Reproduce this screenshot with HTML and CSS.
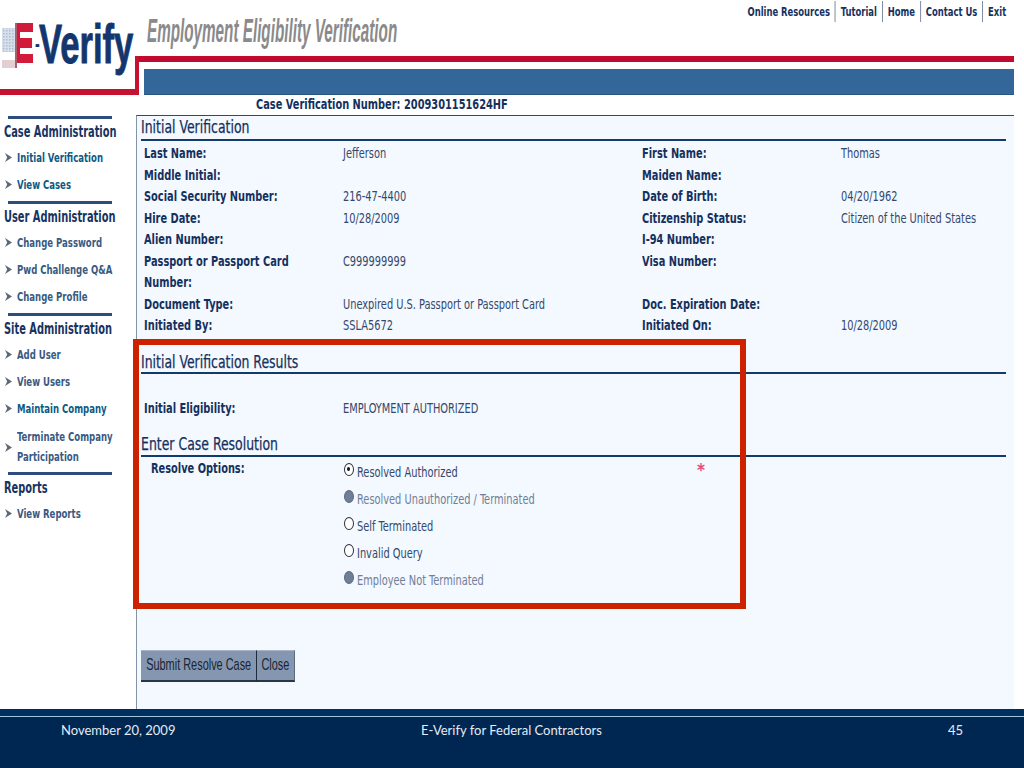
FILE: index.html
```html
<!DOCTYPE html>
<html lang="en">
<head>
<meta charset="utf-8">
<title>E-Verify</title>
<link rel="stylesheet" href="styles.css">
</head>
<body>
<div class="page">
  <header class="header">
    <div class="logo-col">
      <svg class="logo" width="137" height="80" viewBox="0 0 137 80">
        <defs>
          <pattern id="stars" width="3" height="3" patternUnits="userSpaceOnUse">
            <rect width="3" height="3" fill="#d6dfea"/>
            <rect width="1.5" height="1.5" fill="#aebdd2"/>
          </pattern>
        </defs>
        <rect x="2" y="28" width="13" height="24" fill="url(#stars)"/>
        <rect x="2" y="60" width="13" height="8" fill="#e3ced3"/>
        <rect x="15" y="23" width="2" height="45" fill="#a8606c"/>
        <rect x="17" y="23" width="16" height="9" fill="#d01c3a"/>
        <rect x="17" y="32" width="3" height="22" fill="#d01c3a"/>
        <rect x="17" y="38" width="15" height="10" fill="#d01c3a"/>
        <rect x="17" y="54" width="16" height="9" fill="#d01c3a"/>
      </svg>
      <span class="logo-dash">-</span>
      <span class="logo-text">Verify</span>
    </div>
    <div class="banner">
      <div class="banner-top">
        <span class="title-text">Employment Eligibility Verification</span>
        <nav class="topnav">
          <a>Online Resources</a><a>Tutorial</a><a>Home</a><a>Contact Us</a><a>Exit</a>
        </nav>
      </div>
      <div class="red-bar"></div>
      <div class="blue-bar"></div>
    </div>
  </header>
  <div class="content">
    <aside class="sidebar">
      <h3 class="side-head"><span>Case Administration</span></h3>
      <a class="side-link active"><svg class="arrow" viewBox="0 0 7 9"><path d="M0 0L7 4.5L0 9L2.2 4.5Z"/></svg><span>Initial Verification</span></a>
      <a class="side-link active"><svg class="arrow" viewBox="0 0 7 9"><path d="M0 0L7 4.5L0 9L2.2 4.5Z"/></svg><span>View Cases</span></a>
      <h3 class="side-head"><span>User Administration</span></h3>
      <a class="side-link"><svg class="arrow" viewBox="0 0 7 9"><path d="M0 0L7 4.5L0 9L2.2 4.5Z"/></svg><span>Change Password</span></a>
      <a class="side-link"><svg class="arrow" viewBox="0 0 7 9"><path d="M0 0L7 4.5L0 9L2.2 4.5Z"/></svg><span>Pwd Challenge Q&amp;A</span></a>
      <a class="side-link"><svg class="arrow" viewBox="0 0 7 9"><path d="M0 0L7 4.5L0 9L2.2 4.5Z"/></svg><span>Change Profile</span></a>
      <h3 class="side-head"><span>Site Administration</span></h3>
      <a class="side-link"><svg class="arrow" viewBox="0 0 7 9"><path d="M0 0L7 4.5L0 9L2.2 4.5Z"/></svg><span>Add User</span></a>
      <a class="side-link"><svg class="arrow" viewBox="0 0 7 9"><path d="M0 0L7 4.5L0 9L2.2 4.5Z"/></svg><span>View Users</span></a>
      <a class="side-link active"><svg class="arrow" viewBox="0 0 7 9"><path d="M0 0L7 4.5L0 9L2.2 4.5Z"/></svg><span>Maintain Company</span></a>
      <a class="side-link two"><svg class="arrow" viewBox="0 0 7 9"><path d="M0 0L7 4.5L0 9L2.2 4.5Z"/></svg><span>Terminate Company<br>Participation</span></a>
      <h3 class="side-head"><span>Reports</span></h3>
      <a class="side-link"><svg class="arrow" viewBox="0 0 7 9"><path d="M0 0L7 4.5L0 9L2.2 4.5Z"/></svg><span>View Reports</span></a>
    </aside>
    <main class="main-col">
      <div class="case-num"><span>Case Verification Number: 2009301151624HF</span></div>
      <section class="panel">
        <h2 class="sec first"><span>Initial Verification</span></h2>
        <div class="grid">
          <b>Last Name:</b><span>Jefferson</span><b>First Name:</b><span>Thomas</span>
          <b>Middle Initial:</b><span></span><b>Maiden Name:</b><span></span>
          <b>Social Security Number:</b><span>216-47-4400</span><b>Date of Birth:</b><span>04/20/1962</span>
          <b>Hire Date:</b><span>10/28/2009</span><b>Citizenship Status:</b><span>Citizen of the United States</span>
          <b>Alien Number:</b><span></span><b>I-94 Number:</b><span></span>
          <b>Passport or Passport Card<br>Number:</b><span>C999999999</span><b>Visa Number:</b><span></span>
          <b>Document Type:</b><span>Unexpired U.S. Passport or Passport Card</span><b>Doc. Expiration Date:</b><span></span>
          <b>Initiated By:</b><span>SSLA5672</span><b>Initiated On:</b><span>10/28/2009</span>
        </div>
        <h2 class="sec results"><span>Initial Verification Results</span></h2>
        <div class="grid elig">
          <b>Initial Eligibility:</b><span>EMPLOYMENT AUTHORIZED</span>
        </div>
        <h2 class="sec resolution"><span>Enter Case Resolution</span></h2>
        <div class="resolve">
          <div class="resolve-label"><b>Resolve Options:</b></div>
          <div class="options">
            <div class="opt"><span class="radio on"></span><span class="opt-text">Resolved Authorized</span></div>
            <div class="opt off"><span class="radio dis"></span><span class="opt-text">Resolved Unauthorized / Terminated</span></div>
            <div class="opt"><span class="radio"></span><span class="opt-text">Self Terminated</span></div>
            <div class="opt"><span class="radio"></span><span class="opt-text">Invalid Query</span></div>
            <div class="opt off"><span class="radio dis"></span><span class="opt-text">Employee Not Terminated</span></div>
          </div>
          <span class="req">*</span>
        </div>
        <div class="buttons">
          <button class="btn submit"><span>Submit Resolve Case</span></button><button class="btn close"><span>Close</span></button>
        </div>
        <div class="highlight"></div>
      </section>
    </main>
  </div>
  <footer class="footer">
    <span class="f-date">November 20, 2009</span>
    <span class="f-title">E-Verify for Federal Contractors</span>
    <span class="f-num">45</span>
  </footer>
</div>
</body>
</html>
```
FILE: styles.css
```css
* { box-sizing: border-box; }
html, body { margin: 0; padding: 0; background: #fff; }
body { font-family: "DejaVu Sans", sans-serif; font-stretch: condensed; color: #1d3358; }
.page { width: 1024px; height: 768px; display: flex; flex-direction: column; overflow: hidden; }

.header { display: flex; height: 95px; flex: none; }
.logo-col { position: relative; width: 139px; height: 95px; border-bottom: 6px solid #c4122f; flex: none; }
.logo-col::after { content: ""; position: absolute; right: 0; top: 56px; bottom: 0; width: 4px; background: #c4122f; }
.logo { display: block; }
.logo-text { position: absolute; left: 39px; top: 14px; font-family: "Liberation Sans", sans-serif; font-weight: 700; font-size: 55px; line-height: 60px; color: #14366e; -webkit-text-stroke: .9px #14366e; white-space: nowrap; transform: scaleX(.63); transform-origin: left top; }
.logo-dash { position: absolute; left: 35px; top: 32px; font-family: "Liberation Sans", sans-serif; font-weight: 700; font-size: 24px; line-height: 24px; color: #14366e; transform: scaleX(.6); transform-origin: left top; }
.banner { width: 875px; display: flex; flex-direction: column; }
.banner-top { height: 56px; display: flex; justify-content: space-between; align-items: flex-start; }
.title-text { margin: 12px 0 0 8px; font-family: "Liberation Sans", sans-serif; font-style: italic; font-weight: 700; font-size: 33px; line-height: 38px; color: #8a8a8a; white-space: nowrap; transform: scaleX(.462); transform-origin: left top; width: 250px; }
.topnav { display: flex; margin-top: 1px; margin-right: 3px; font-size: 13px; font-weight: 700; color: #16325f; transform: scaleX(.72); transform-origin: right top; white-space: nowrap; }
.topnav a { height: 21px; line-height: 21px; padding: 0 7px; border-left: 1.4px solid #4d5f7d; }
.topnav a:first-child { border-left: 0; }
.red-bar { height: 6px; background: #c00a30; }
.blue-bar { height: 26px; margin: 7px 0 0 5px; background: #336699; border-bottom: 1px solid #2a5580; }

.content { flex: 1; display: flex; min-height: 0; }
.sidebar { width: 136px; flex: none; padding: 18px 0 0 4px; }
.side-head { margin: 3px 0 0; width: 112px; font-size: 15px; line-height: 26px; height: 28px; font-weight: 700; color: #17335f; white-space: nowrap; border-top: 3px solid transparent; background: linear-gradient(#2e4d7c, #2e4d7c) 4px 0 / 104px 3px no-repeat; background-origin: border-box; }
.side-head span { display: inline-block; transform: scaleX(.73); transform-origin: left center; }
.side-link { display: flex; align-items: center; height: 27px; font-size: 13px; font-weight: 700; color: #3a5a82; white-space: nowrap; }
.side-link span { transform: scaleX(.73); transform-origin: left center; }
.side-link.active { color: #0d5a86; }
.side-link.two { height: 44px; line-height: 20px; margin-top: 3px; margin-bottom: 1px; }
.arrow { width: 7px; height: 9px; margin: 0 5px 0 1px; fill: #5e6874; flex: none; }

.main-col { width: 878px; display: flex; flex-direction: column; }
.case-num { height: 20px; padding-left: 120px; font-size: 14px; font-weight: 700; line-height: 18px; color: #14305c; white-space: nowrap; }
.case-num span { display: inline-block; transform: scaleX(.78); transform-origin: left center; }
.panel { position: relative; flex: 1; background: #f4f8ff; border-top: 1px solid #2a4a78; border-left: 1px solid #8494a8; padding: 0 8px 0 4px; }
.sec { margin: 0; font-size: 18px; font-weight: 400; line-height: 20px; color: #14305c; border-bottom: 2px solid #123a6c; white-space: nowrap; }
.sec span { display: inline-block; transform: scaleX(.77); transform-origin: left center; -webkit-text-stroke: .25px #14305c; }
.sec.first { padding-top: 1px; height: 25px; }
.sec.results { height: 37px; padding-top: 15px; }
.sec.resolution { height: 29px; padding-top: 6px; }
.grid { display: grid; grid-template-columns: 199px 299px 199px 178px; grid-auto-rows: auto; padding: 2px 0 0 3px; font-size: 14px; line-height: 21.5px; }
.grid b, .grid span { white-space: nowrap; transform: scaleX(.78); transform-origin: left center; }
.grid b { color: #14305c; }
.grid span { color: #33486b; }
.grid.elig { padding-top: 24px; height: 54px; }
.resolve { display: flex; padding: 0 0 0 10px; }
.resolve-label { width: 192px; font-size: 14px; line-height: 22px; flex: none; color: #14305c; transform: scaleX(.78); transform-origin: left center; }
.options { width: 353px; flex: none; padding-top: 4px; }
.opt { display: flex; height: 27px; align-items: flex-start; font-size: 14px; line-height: 22px; color: #33486b; white-space: nowrap; }
.opt-text { transform: scaleX(.78); transform-origin: left center; }
.opt.off { color: #6f7f97; }
.radio { width: 10px; height: 13px; margin: 2px 3px 0 1px; border-radius: 50%; border: 1.5px solid #2a2f3a; background: #fff; flex: none; position: relative; }
.radio.on::after { content: ""; position: absolute; left: 2px; top: 3px; width: 3px; height: 4px; border-radius: 50%; background: #111; }
.radio.dis { background: #6f7f97; border-color: #5d6b80; }
.req { margin: 2px 0 0 1px; color: #e8487a; font-size: 17px; line-height: 22px; font-weight: 700; }
.buttons { display: flex; margin-top: 54px; }
.btn { height: 32px; padding: 0; margin: 0; background: #8496b0; border: 0; border-bottom: 2px solid #2b3644; border-top: 1px solid #a9b5c6; font-family: "Liberation Sans", sans-serif; font-size: 12px; color: #1b2533; white-space: nowrap; }
.btn span { display: inline-block; transform: scale(.91, 1.33); }
.btn.submit { width: 116px; border-right: 1px solid #1d2a3c; }
.btn.close { width: 38px; border-right: 1px solid #5c6a7c; }
.highlight { position: absolute; left: -4px; top: 223px; width: 613px; height: 270px; border: 6px solid #cc2200; }

.footer { position: relative; height: 59px; flex: none; background: #002652; border-top: 7px solid #00305f; font-family: "Lato", sans-serif; font-size: 13px; color: #e4ecf4; line-height: 14px; }
.footer::before { content: ""; display: block; height: 1px; background: #a4c6dc; }
.f-date { position: absolute; left: 61px; top: 7px; }
.f-title { position: absolute; left: 421px; top: 7px; }
.f-num { position: absolute; left: 948px; top: 7px; }
```
